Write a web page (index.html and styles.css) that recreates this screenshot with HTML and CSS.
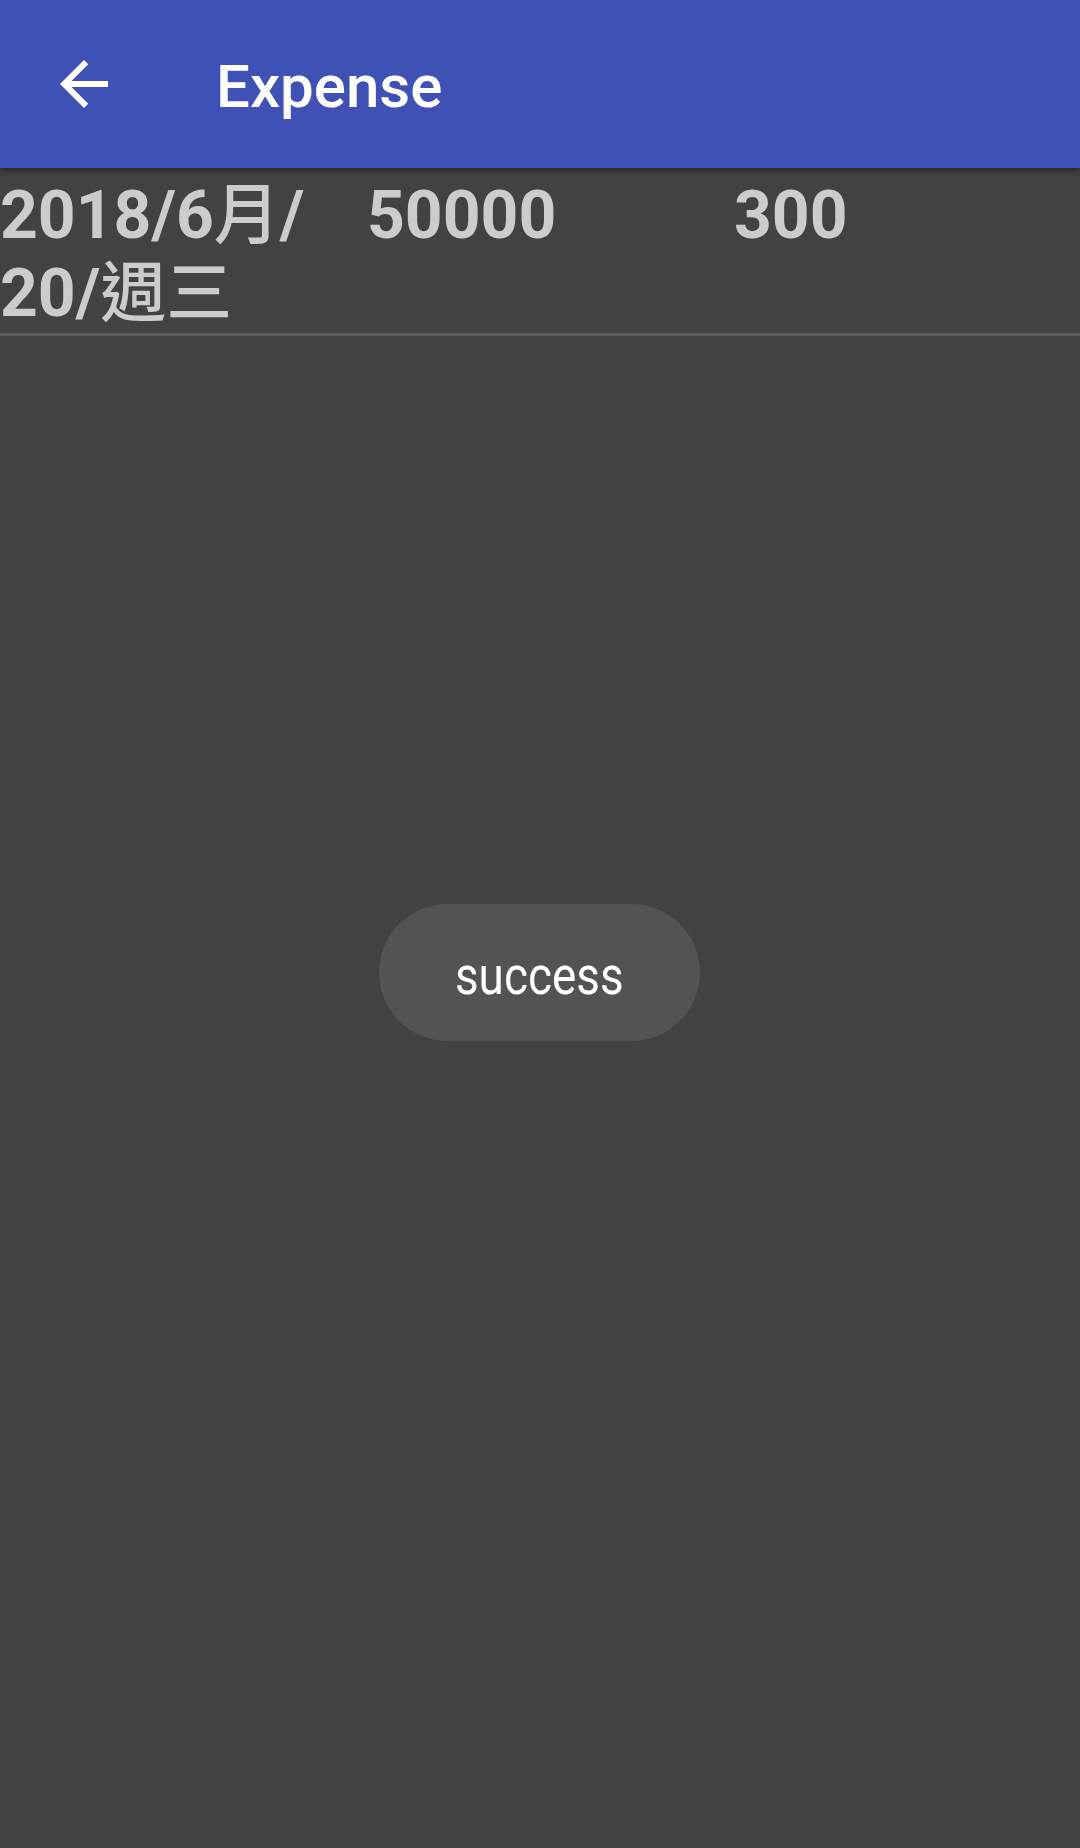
FILE: index.html
```html
<!DOCTYPE html>
<html lang="zh-Hant">
<head>
<meta charset="utf-8">
<title>Expense</title>
<link rel="stylesheet" href="styles.css">
</head>
<body>
<header class="appbar">
  <div class="nav">
    <svg class="nav-icon" viewBox="0 0 24 24" width="72" height="72" aria-hidden="true">
      <path d="M20 11H7.83l5.59-5.59L12 4l-8 8 8 8 1.41-1.41L7.83 13H20v-2z" fill="#ffffff"/>
    </svg>
  </div>
  <h1 class="title">Expense</h1>
</header>
<main class="content">
  <div class="row">
    <div class="col">2018/6<span class="cjk">月</span>/<br>20/<span class="cjk">週三</span></div>
    <div class="col">50000</div>
    <div class="col">300</div>
  </div>
  <div class="divider"></div>
  <div class="toast"><span class="toast-text">success</span></div>
</main>
</body>
</html>
```
FILE: styles.css
```css
html, body {
  margin: 0;
  padding: 0;
}
body {
  width: 1080px;
  height: 1848px;
  background: #424242;
  font-family: Roboto, "Noto Sans CJK TC", sans-serif;
  overflow: hidden;
}
.appbar {
  position: relative;
  z-index: 2;
  height: 168px;
  background: #3f51b5;
  display: flex;
  align-items: center;
  padding-left: 48px;
  box-shadow: 0 2px 5px rgba(0, 0, 0, 0.45);
}
.nav {
  width: 72px;
  height: 72px;
  display: flex;
}
.nav-icon {
  display: block;
}
.title {
  margin: 5px 0 0 96px;
  color: #ffffff;
  font-family: Roboto, sans-serif;
  font-weight: 500;
  font-size: 60px;
  line-height: 72px;
}
.content {
  position: relative;
  height: 1680px;
}
.row {
  display: grid;
  grid-template-columns: 367px 367px 1fr;
  padding-top: 9px;
  color: #cccccc;
  font-family: Roboto, "Noto Sans CJK TC", sans-serif;
  font-weight: 700;
  font-size: 66px;
  line-height: 78px;
}
.col {
  white-space: nowrap;
}
.cjk {
  font-weight: 500;
}
.divider {
  height: 3px;
  background: #5c5c5c;
}
.toast {
  position: absolute;
  left: 379px;
  top: 736px;
  width: 321px;
  height: 137px;
  border-radius: 69px;
  background: #535353;
  display: flex;
  align-items: center;
  justify-content: center;
}
.toast-text {
  display: inline-block;
  color: #ffffff;
  font-family: Roboto, sans-serif;
  font-size: 54px;
  line-height: 64px;
  transform: scaleX(0.85);
  margin-top: 6px;
}
```
